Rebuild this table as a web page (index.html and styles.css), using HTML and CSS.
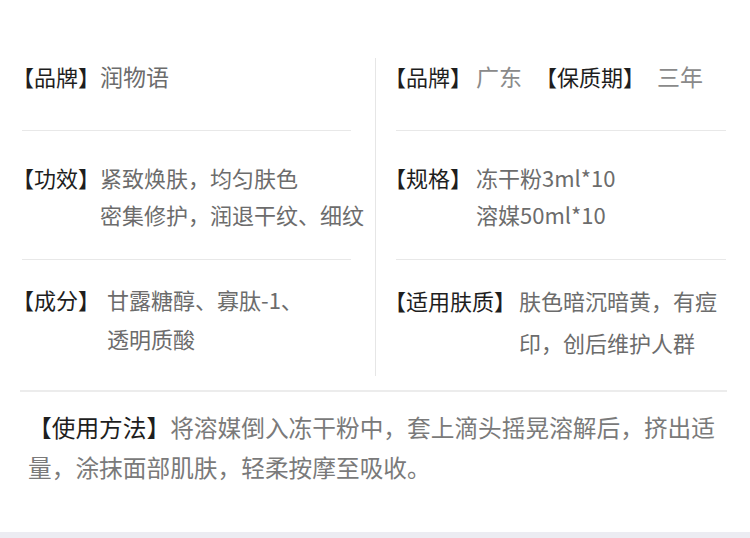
FILE: index.html
```html
<!DOCTYPE html>
<html lang="zh-CN">
<head>
<meta charset="utf-8">
<title>产品信息</title>
<link rel="stylesheet" href="styles.css">
</head>
<body>
<div class="page">
  <div class="specs">
    <div class="col col-left">
      <div class="row r1">
        <span class="k">【品牌】</span>
        <div class="v v-lg">润物语</div>
      </div>
      <div class="row r2">
        <span class="k">【功效】</span>
        <div class="v"><div>紧致焕肤，均匀肤色</div><div>密集修护，润退干纹、细纹</div></div>
      </div>
      <div class="row r3">
        <span class="k k-gap">【成分】</span>
        <div class="v"><div>甘露糖醇、寡肽-1、</div><div>透明质酸</div></div>
      </div>
    </div>
    <div class="col col-right">
      <div class="row r1">
        <span class="k k-gap-s">【品牌】</span>
        <div class="v v-light">广东</div>
        <span class="k k-second">【保质期】</span>
        <div class="v v-light">三年</div>
      </div>
      <div class="row r2">
        <span class="k k-gap-s">【规格】</span>
        <div class="v"><div>冻干粉3ml*10</div><div>溶媒50ml*10</div></div>
      </div>
      <div class="row r3 r3-right">
        <span class="k k-gap-xs">【适用肤质】</span>
        <div class="v"><div>肤色暗沉暗黄，有痘</div><div>印，创后维护人群</div></div>
      </div>
    </div>
  </div>
  <div class="usage">
    <p class="usage-text">【使用方法】<span class="uv">将溶媒倒入冻干粉中，套上滴头摇晃溶解后，挤出适量，涂抹面部肌肤，轻柔按摩至吸收。</span></p>
  </div>
  <div class="band"></div>
</div>
</body>
</html>
```
FILE: styles.css
```css
html, body {
  margin: 0;
  padding: 0;
  background: #ffffff;
}
body {
  width: 750px;
  height: 538px;
  overflow: hidden;
  font-family: "Noto Sans CJK SC", "Noto Sans", sans-serif;
}
.page {
  display: flex;
  flex-direction: column;
  height: 538px;
}
.specs {
  display: grid;
  grid-template-columns: 376px 1fr;
  margin-top: 58px;
}
.col {
  display: flex;
  flex-direction: column;
}
.col-left {
  border-right: 1px solid #e6e6e6;
  padding: 0 24px 0 22px;
}
.col-right {
  padding: 0 24px 0 20px;
}
.row {
  display: flex;
  align-items: flex-start;
  font-size: 22px;
}
.row + .row {
  border-top: 1px solid #e8e8e8;
}
.r1 {
  line-height: 36px;
  padding: 0 0 36px;
}
.r2 {
  line-height: 37px;
  padding: 28px 0 26px;
}
.r3 {
  line-height: 39px;
  padding: 20px 0 16px;
}
.r3-right {
  line-height: 42px;
  padding: 19px 0 13px;
}
.k {
  color: #1e1e1e;
  margin-left: -10px;
  white-space: nowrap;
}
.k-gap { margin-right: 7px; }
.k-gap-s { margin-right: 4px; margin-left: -12px; }
.k-gap-xs { margin-right: 3px; margin-left: -12px; }
.k-second {
  margin-left: 13px;
  margin-right: 12px;
}
.v {
  color: #6c6c6c;
  white-space: nowrap;
}
.v-lg {
  font-size: 23px;
}
.v-light {
  color: #8a8a8a;
  font-size: 23px;
}
.usage {
  margin: 14px 23px 0 20px;
  border-top: 2px solid #ececec;
  padding: 15px 0 0 8px;
  flex: 1;
}
.usage-text {
  margin: 0;
  font-size: 23.7px;
  line-height: 40px;
  color: #1e1e1e;
}
.uv {
  color: #7a7a7a;
}
.band {
  height: 6px;
  background: #ececf2;
}
```
